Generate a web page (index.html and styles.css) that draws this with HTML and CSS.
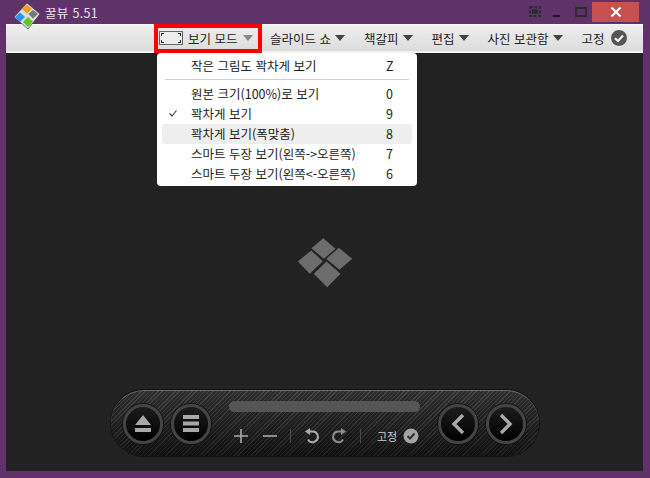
FILE: index.html
```html
<!DOCTYPE html>
<html lang="ko">
<head>
	<meta charset="UTF-8">
	<title>꿀뷰 5.51</title>
	<link rel="stylesheet" href="styles.css">
</head>
<body>
<div class="window">
	<div class="titlebar">
		<svg class="app-logo" width="28" height="26" viewBox="0 0 28 26">
			<path d="M14 0 L27 11 L15 26 L1 14Z" fill="#dcdcdc" stroke="#3a2a40" stroke-width=".6"/>
			<path d="M14 1.5 L19 6 L14 10.5 L9 6Z" fill="#f0a020"/>
			<path d="M7 9.5 L12 14 L7 19 L2 14Z" fill="#2a94e8"/>
			<path d="M20 7 L25 11 L20 15.5 L15.5 11Z" fill="#777"/>
			<path d="M15 14 L20 19 L15 24 L10 19Z" fill="#5cc820"/>
		</svg>
		<span class="app-name">꿀뷰 5.51</span>
		<div class="win-btns">
			<svg class="win-pin" width="12" height="11" viewBox="0 0 12 11">
				<path d="M1 1h10v9H1z" fill="none" stroke="#2c2c2c" stroke-width="2" stroke-dasharray="3 1.5"/>
				<rect x="3" y="3" width="6" height="5" fill="#2c2c2c"/>
			</svg>
			<div class="win-min"></div>
			<div class="win-max"></div>
			<div class="win-close">
				<svg width="12" height="12" viewBox="0 0 12 12">
					<path d="M1.5 1.5 L10.5 10.5 M10.5 1.5 L1.5 10.5" stroke="#fff" stroke-width="2.2"/>
				</svg>
			</div>
		</div>
	</div>

	<div class="menubar">
		<div class="menu menu-active">
			<svg width="24" height="14" viewBox="0 0 24 14">
				<rect x=".5" y=".5" width="23" height="13" fill="#eee" stroke="#666"/>
				<path d="M2 2h3v1H3v2H2zM22 2h-3v1h2v2h1zM2 12h3v-1H3V9H2zM22 12h-3v-1h2V9h1z" fill="#333"/>
			</svg>
			<span>보기 모드</span><i class="arrow arrow-light"></i>
		</div>
		<div class="menu"><span>슬라이드 쇼</span><i class="arrow"></i></div>
		<div class="menu"><span>책갈피</span><i class="arrow"></i></div>
		<div class="menu"><span>편집</span><i class="arrow"></i></div>
		<div class="menu"><span>사진 보관함</span><i class="arrow"></i></div>
		<div class="menu menu-pin">
			<span>고정</span>
			<svg width="18" height="18" viewBox="0 0 18 18">
				<circle cx="9" cy="9" r="8.5" fill="#555" stroke="#f4f4f4"/>
				<path d="M5 9.2 L8 12 L13 6.5" fill="none" stroke="#f2f2f2" stroke-width="2.2"/>
			</svg>
		</div>
	</div>

	<div class="viewer">
		<svg class="center-logo" width="56" height="50" viewBox="0 0 56 50">
			<path d="M26.2 .2 L38.5 10.8 L26.8 20.8 L14.5 10.2Z M14.2 12.5 L25.8 23.2 L12.8 35.8 L.8 23.5Z M41.8 9.8 L55.2 20.8 L42.5 31.8 L29.2 20.8Z M29.5 23.5 L43.5 35.8 L30.2 49.2 L16.8 35.8Z" fill="#6c6c6c"/>
		</svg>

		<div class="dropdown">
			<div class="item"><span class="check"></span><span class="label">작은 그림도 꽉차게 보기</span><span class="key">Z</span></div>
			<div class="sep"></div>
			<div class="item"><span class="check"></span><span class="label">원본 크기(100%)로 보기</span><span class="key">0</span></div>
			<div class="item">
				<span class="check"><svg width="8" height="7" viewBox="0 0 8 7"><path d="M.5 3.5 L3 6 L7.5 .5" fill="none" stroke="#333" stroke-width="1.1"/></svg></span>
				<span class="label">꽉차게 보기</span><span class="key">9</span>
			</div>
			<div class="item item-hover"><span class="check"></span><span class="label">꽉차게 보기(폭맞춤)</span><span class="key">8</span></div>
			<div class="item"><span class="check"></span><span class="label">스마트 두장 보기(왼쪽-&gt;오른쪽)</span><span class="key">7</span></div>
			<div class="item"><span class="check"></span><span class="label">스마트 두장 보기(왼쪽&lt;-오른쪽)</span><span class="key">6</span></div>
		</div>

		<div class="player">
			<div class="round-btn">
				<svg width="18" height="19" viewBox="0 0 18 19"><path d="M9 1 L17 11 H1Z" fill="#a8a8a8"/><rect x="1" y="14" width="16" height="4" fill="#a8a8a8"/></svg>
			</div>
			<div class="round-btn">
				<svg width="18" height="19" viewBox="0 0 18 19"><path d="M1 1h16v4H1zM1 7.500h16v4H1zM1 14h16v4H1z" fill="#a8a8a8"/></svg>
			</div>
			<div class="player-mid">
				<div class="slider"></div>
				<div class="tools">
					<svg width="14" height="14" viewBox="0 0 14 14"><path d="M7 0v14M0 7h14" stroke="#aaa" stroke-width="1.6"/></svg>
					<svg class="tool-minus" width="14" height="14" viewBox="0 0 14 14"><path d="M0 7h14" stroke="#aaa" stroke-width="1.6"/></svg>
					<i class="tool-sep"></i>
					<svg width="15" height="16" viewBox="0 0 15 16"><path d="M5 3.500 H8.500 A5.300 5.300 0 1 1 4 11.500" fill="none" stroke="#aaa" stroke-width="2"/><path d="M6 0 L1 3.500 L6 7Z" fill="#aaa"/></svg>
					<svg width="15" height="16" viewBox="0 0 15 16"><path d="M10 3.500 H6.500 A5.300 5.300 0 1 0 11 11.500" fill="none" stroke="#8c8c8c" stroke-width="2"/><path d="M9 0 L14 3.500 L9 7Z" fill="#8c8c8c"/></svg>
					<i class="tool-sep"></i>
					<span class="tool-pin">고정</span>
					<svg width="16" height="16" viewBox="0 0 16 16"><circle cx="8" cy="8" r="7.500" fill="#a4a4a4"/><path d="M4.500 8 L7 10.500 L11.500 5.500" fill="none" stroke="#333" stroke-width="2"/></svg>
				</div>
			</div>
			<div class="round-btn">
				<svg width="14" height="22" viewBox="0 0 14 22"><path d="M12 2 L3 11 L12 20" fill="none" stroke="#a8a8a8" stroke-width="3.400"/></svg>
			</div>
			<div class="round-btn">
				<svg width="14" height="22" viewBox="0 0 14 22"><path d="M2 2 L11 11 L2 20" fill="none" stroke="#a8a8a8" stroke-width="3.400"/></svg>
			</div>
		</div>
	</div>
</div>
</body>
</html>
```

FILE: styles.css
```css
* {
	margin: 0;
	padding: 0;
	box-sizing: border-box;
}

html, body {
	height: 100%;
	overflow: hidden;
}

body {
	font-family: "Noto Sans CJK KR", "Noto Sans", sans-serif;
	font-size: 12.5px;
	color: #222;
}

.window {
	width: 650px;
	height: 478px;
	padding: 0 7px 7px 6px;
	background-color: #5f3369;
	display: flex;
	flex-direction: column;
}

.titlebar {
	height: 24px;
	flex: none;
	display: flex;
	align-items: center;
}
.app-logo {
	position: relative;
	z-index: 2;
	flex: none;
	align-self: flex-start;
	margin: 3px 0 0 7px;
}
.app-name {
	margin-left: 4px;
	font-size: 12.5px;
	color: #e8e2ea;
	letter-spacing: 0.3px;
}
.win-btns {
	margin-left: auto;
	height: 21px;
	margin-top: 1px;
	align-self: flex-start;
	display: flex;
	align-items: center;
}
.win-pin {
	margin-right: 12px;
}
.win-min {
	width: 7px;
	height: 2px;
	margin-top: 9px;
	margin-right: 15px;
	background-color: #1c1c1c;
}
.win-max {
	width: 12px;
	height: 10px;
	margin-right: 5px;
	border: 2px solid #2c2c2c;
}
.win-close {
	width: 47px;
	height: 20px;
	margin-right: 4px;
	background-color: #c75050;
	display: flex;
	align-items: center;
	justify-content: center;
}

.menubar {
	height: 29px;
	flex: none;
	padding-left: 148px;
	background: linear-gradient(#efefef, #dcdcdc);
	border-top: 1px solid #f8f8f8;
	border-bottom: 2px solid #f2f2f2;
	display: flex;
	align-items: center;
}
.menu {
	height: 100%;
	padding: 0 9.5px;
	display: flex;
	align-items: center;
	gap: 4px;
	white-space: nowrap;
}
.menu-active {
	width: 108px;
	height: 29px;
	padding: 0 0 0 1px;
	margin-right: -1.5px;
	border: 4px solid #ff0000;
	gap: 5px;
}
.menu-pin {
	padding-left: 9.5px;
	gap: 5px;
}
.arrow {
	width: 0;
	height: 0;
	border-left: 5px solid transparent;
	border-right: 5px solid transparent;
	border-top: 6px solid #444;
}
.arrow-light {
	border-top-color: #888;
}

.viewer {
	flex: 1;
	position: relative;
	background-color: #222;
	display: flex;
	align-items: center;
	justify-content: center;
}
.center-logo {
	margin-top: 1px;
}

.dropdown {
	position: absolute;
	left: 151px;
	top: 0;
	width: 260px;
	height: 133px;
	padding: 3px 5px;
	background-color: #fff;
	border-radius: 4px;
}
.item {
	height: 20px;
	padding: 0 0 1px 4px;
	border-radius: 3px;
	display: flex;
	align-items: center;
}
.item-hover {
	background-color: #eee;
}
.check {
	width: 25px;
	flex: none;
	padding-left: 3px;
	display: flex;
	align-items: center;
}
.label {
	flex: 1;
}
.key {
	width: 26px;
	flex: none;
}
.sep {
	height: 1px;
	margin: 3px 3px 4px 3px;
	background-color: #ccc;
}

.player {
	position: absolute;
	left: 105px;
	bottom: 15px;
	width: 428px;
	height: 66px;
	padding: 0 12px;
	border-radius: 33px;
	background-color: #2a2a2a;
	background-image: linear-gradient(rgba(255, 255, 255, .07), rgba(0, 0, 0, .45)), repeating-linear-gradient(135deg, #3a3a3a 0 1px, #1c1c1c 1px 3px);
	border-top: 1px solid #6a6a6a;
	box-shadow: 0 0 0 1px #111;
	display: flex;
	align-items: center;
	gap: 8px;
}
.round-btn {
	width: 40px;
	height: 40px;
	flex: none;
	border-radius: 50%;
	background: linear-gradient(#1c1c1c, #000);
	border: 3px solid #444;
	box-shadow: 0 0 0 1px #111;
	display: flex;
	align-items: center;
	justify-content: center;
}
.player-mid {
	width: 191px;
	margin: 0 10px;
	padding-top: 10px;
	flex: none;
	align-self: flex-start;
	display: flex;
	flex-direction: column;
	gap: 16px;
}
.slider {
	height: 11px;
	border-radius: 6px;
	background-color: #555;
}
.tools {
	height: 16px;
	display: flex;
	align-items: center;
	gap: 13px;
	padding-left: 5px;
}
.tool-minus {
	margin-left: 2px;
}
.tool-sep {
	width: 1px;
	height: 14px;
	background-color: #4a4a4a;
}
.tool-pin {
	font-size: 11px;
	color: #ccc;
	margin-left: 3px;
	margin-right: -7px;
}
```
